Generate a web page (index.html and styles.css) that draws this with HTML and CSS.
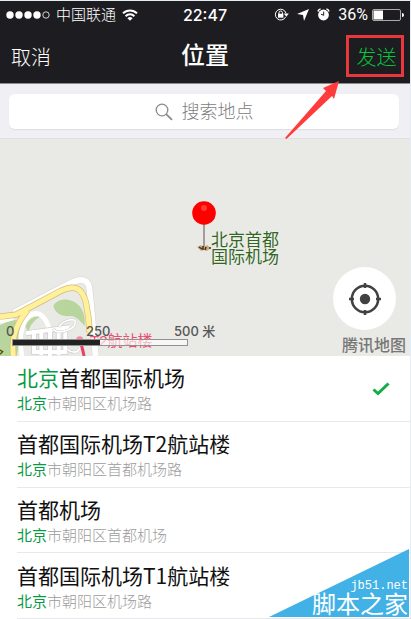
FILE: index.html
```html
<!DOCTYPE html>
<html lang="zh-CN">
<head>
<meta charset="utf-8">
<meta name="viewport" content="width=device-width, initial-scale=1">
<title>位置</title>
<link rel="stylesheet" href="styles.css">
</head>
<body>
<div class="app">
  <header class="top">
    <div class="status">
      <div class="status-side">
        <svg class="dots" width="44" height="10" viewBox="0 0 44 10" fill="#fff"><circle cx="4" cy="5" r="3.7"/><circle cx="13" cy="5" r="3.7"/><circle cx="22" cy="5" r="3.7"/><circle cx="31" cy="5" r="3.7"/><circle cx="40" cy="5" r="3.2" fill="none" stroke="#fff" stroke-width=".8"/></svg>
        <span class="carrier">中国联通</span>
        <svg width="16" height="12" viewBox="0 0 16 12" fill="none" stroke="#fff" stroke-width="2"><path d="M1 4.4a10 10 0 0 1 14 0M3.6 7.2a6.2 6.2 0 0 1 8.8 0"/><path d="M8 11.8 5.4 9.2a3.7 3.7 0 0 1 5.2 0z" fill="#fff" stroke="none"/></svg>
      </div>
      <span class="time">22:47</span>
      <div class="status-side status-right">
        <svg width="15" height="13" viewBox="0 0 15 13"><path d="M11.7 8.8a5.4 5.4 0 1 1 .3-3.5" fill="none" stroke="#fff" stroke-width="1"/><path d="M9.8 5.5h5l-2.5 3.2z" fill="#fff"/><rect x="4" y="5.7" width="5.4" height="4" fill="#fff"/><path d="M5 6V4.7a1.7 1.7 0 0 1 3.4 0V6" fill="none" stroke="#fff"/></svg>
        <svg width="12" height="12" viewBox="0 0 12 12" fill="#fff"><path d="M12 0 7 12 6 6 0 5z"/></svg>
        <svg width="13" height="13" viewBox="0 0 13 13"><circle cx="6.5" cy="7" r="5.4" fill="#fff"/><path d="M.9 3.5A4 4 0 0 1 3.6.9M9.4.9a4 4 0 0 1 2.7 2.6" fill="none" stroke="#fff" stroke-width="1.5"/><path d="M6.7 3.6v3.7L4 6.2" fill="none" stroke="#1d1d21" stroke-width="1"/></svg>
        <span class="percent">36%</span>
        <svg width="32" height="12" viewBox="0 0 32 12"><rect x=".5" y=".5" width="28" height="11" rx="1.5" fill="none" stroke="#aaa"/><rect x="1.5" y="1.5" width="9.5" height="9" fill="#fff"/><path d="M30 4a2 2 0 0 1 0 4z" fill="#fff"/></svg>
      </div>
    </div>
    <nav class="nav">
      <button class="cancel" type="button">取消</button>
      <h1>位置</h1>
      <button class="send" type="button">发送</button>
    </nav>
  </header>
  <svg class="arrow" width="58" height="60" viewBox="0 0 58 60"><path d="M55 1 39 8l3 3L1 58l1.500 1L48 16l2 3z" fill="#ff3b3b"/></svg>

  <div class="search">
    <label class="search-box">
      <svg width="18" height="18" viewBox="0 0 18 18" fill="none" stroke="#8b8b8b" stroke-width="1.300"><circle cx="7" cy="7" r="5.800"/><path d="m11.200 11.200 5.800 5.600" stroke-width="1.800"/></svg>
      <input type="text" placeholder="搜索地点" aria-label="搜索地点">
    </label>
  </div>

  <section class="map" aria-label="地图">
    <svg class="roads" width="206" height="96" viewBox="0 0 618 288" fill="none">
      <path d="M0 196 38 178l34 12-22 98H0z" fill="#b7d59c"/>
      <path d="M160 138c14-25 50-24 72-6 18 14 24 40 22 66-16-18-26-29-42-30-20 2-44-2-52-30z" fill="#b7d59c"/>
      <path d="M74 194c10-16 30-26 46-24-20 12-28 24-36 46z" fill="#b7d59c"/>
      <path d="M42 158 218 66q48-20 51 26l18 196" stroke="#d5d5d0" stroke-width="21"/>
      <path d="M42 158 218 66q48-20 51 26l18 196" stroke="#fff" stroke-width="18"/>
      <path d="M66 288c-10-52-6-94 24-122 30-18 50 10 58 44M0 184l40-10" stroke="#fff" stroke-width="14"/>
      <g stroke="#d4cfd2" stroke-width="17"><path d="m78 220 130-18M102 210v66h94v-62M124 210v76M150 208v80M176 210v76"/></g>
      <g stroke="#fff" stroke-width="12"><path d="m78 220 130-18M102 210v66h94v-62M124 210v76M150 208v80M176 210v76"/></g>
      <path d="M178 202c4-18 50-34 48-14-2 22-56 38-66 18m42 62c26 20 48 0 36-26" stroke="#cfcacc" stroke-width="8"/>
      <path d="M178 202c4-18 50-34 48-14-2 22-56 38-66 18m42 62c26 20 48 0 36-26" stroke="#fff" stroke-width="5"/>
      <path d="M0 170l48-6 132-70c48-24 68-6 78 34 8 40 10 64 11 90M82 152C48 190 34 232 40 288" stroke="#d5ba74" stroke-width="19"/>
      <path d="M0 170l48-6 132-70c48-24 68-6 78 34 8 40 10 64 11 90M82 152C48 190 34 232 40 288" stroke="#fff09a" stroke-width="15"/>
      <path d="M238 240q8 16 14 48" stroke="#e74164" stroke-width="9"/>
      <circle cx="239" cy="239" r="10" fill="#f58ba0"/>
      <path d="m0 270 8 5-8 8" stroke="#554400" stroke-width="4"/>
    </svg>
    <span class="terminal">T2航站楼</span>
    <div class="scale">
      <div class="scale-labels"><span>0</span><span>250</span><span>500 米</span></div>
      <div class="scale-bar"></div>
    </div>
    <svg class="pin" width="26" height="54" viewBox="0 0 26 54"><path d="M13 22v25" stroke="#a39c9a" stroke-width="2"/><path d="m6 46 4-2 3 2 3-2 4 3-4 3-3-1-3 1z" fill="#c6ae80"/><path d="m8 46 3 2m1-3v4m3-3-1 3m4-2h2" stroke="#43321e" stroke-width="1.500"/><circle cx="13" cy="12" r="11.800" fill="#f00"/><circle cx="13" cy="7" r="3" fill="#ff3b30"/></svg>
    <p class="place">北京首都<br>国际机场</p>
    <div class="map-corner">
      <button class="locate" type="button" aria-label="定位"><svg width="34" height="34" viewBox="0 0 34 34" fill="none" stroke="#414141"><circle cx="17" cy="17" r="13.200" stroke-width="2.500"/><path d="M17 1v5M17 28v5M1 17h5M28 17h5" stroke-width="2.500"/><circle cx="17" cy="17" r="5.200" fill="#414141" stroke="none"/></svg></button>
      <span class="provider">腾讯地图</span>
    </div>
  </section>

  <ul class="results">
    <li><div class="result"><h2><em>北京</em>首都国际机场</h2><p><em>北京</em>市朝阳区机场路</p></div>
      <svg class="check" width="18" height="14" viewBox="0 0 18 14" fill="none" stroke="#12ad45" stroke-width="3"><path d="m1.500 7.500 4.500 4L16.500 1.500"/></svg></li>
    <li><div class="result"><h2>首都国际机场T2航站楼</h2><p><em>北京</em>市朝阳区首都机场路</p></div></li>
    <li><div class="result"><h2>首都机场</h2><p><em>北京</em>市朝阳区首都机场</p></div></li>
    <li><div class="result"><h2>首都国际机场T1航站楼</h2><p><em>北京</em>市朝阳区机场路</p></div></li>
  </ul>

  <div class="watermark">
    <svg width="140" height="68" viewBox="0 0 140 68"><path d="M140 0v68H0z" fill="#42b2e6"/></svg>
    <div class="mark-text">
      <span class="mark-url">jb51.net</span>
      <span class="mark-name">脚本之家</span>
    </div>
  </div>
</div>
</body>
</html>
```
FILE: styles.css
```css
* {
  box-sizing: border-box;
}

body {
  margin: 0;
  background: #e3edf2;
  font-family: "Liberation Sans", "Noto Sans CJK SC", sans-serif;
}

svg {
  display: block;
  flex: none;
}

button {
  margin: 0;
  padding: 0;
  border: 0;
  background: none;
  font: inherit;
}

h1, h2, p, ul {
  margin: 0;
  padding: 0;
  font-weight: 400;
}

em {
  color: #079a44;
  font-style: normal;
}

.app {
  position: relative;
  display: flex;
  flex-direction: column;
  min-height: 100vh;
  padding: 1px 1px 0 0;
}

.top {
  height: 83px;
  padding-top: 2px;
  border-bottom: 1px solid #8d8d90;
  background: #1d1d21;
  color: #fff;
}

.status {
  display: grid;
  grid-template-columns: 1fr auto 1fr;
  align-items: center;
  height: 23px;
  padding: 0 6px;
}

.status-side {
  display: flex;
  align-items: center;
  gap: 6px;
}

.status-right {
  justify-content: flex-end;
  gap: 8px;
}

.carrier {
  font-size: 15px;
  font-weight: 300;
  line-height: 20px;
}

.time {
  font: 500 16px/20px Inter, sans-serif;
}

.percent {
  margin-right: -4px;
  font: 400 16px/20px Roboto, sans-serif;
}

.nav {
  display: grid;
  grid-template-columns: 1fr auto 1fr;
  align-items: center;
  height: 56px;
  padding: 4px 6px 0;
}

.nav h1 {
  font-size: 24px;
  font-weight: 500;
  line-height: 34px;
}

.cancel {
  justify-self: start;
  margin-left: 5px;
  color: #fff;
  font-size: 20px;
  font-weight: 300;
}

.send {
  justify-self: end;
  width: 58px;
  height: 42px;
  padding-left: 3px;
  border: 3px solid #e9383d;
  color: #08c53b;
  font-size: 20px;
  font-weight: 300;
}

.arrow {
  position: absolute;
  z-index: 2;
  top: 80px;
  right: 69px;
}

.search {
  padding: 10px 11px 9px 9px;
  border-bottom: 1px solid #e0e0e3;
  background: #efeff4;
}

.search-box {
  display: flex;
  align-items: center;
  justify-content: center;
  gap: 9px;
  height: 35px;
  border-radius: 6px;
  background: #fff;
  box-shadow: 0 1px 1px #dedee3;
}

.search-box input {
  width: 72px;
  height: 32px;
  padding: 2px 0 0;
  border: 0;
  outline: 0;
  background: none;
  font: inherit;
  font-size: 18px;
}

.search-box input::placeholder {
  color: #808080;
  font-weight: 300;
}

.map {
  position: relative;
  flex: none;
  height: 217px;
  overflow: hidden;
  background: #e9e9e5;
}

.roads {
  position: absolute;
  bottom: 0;
  left: 0;
}

.terminal {
  position: absolute;
  bottom: 5px;
  left: 90px;
  color: #ee4d70;
  font-size: 15px;
  line-height: 20px;
}

.scale {
  position: absolute;
  bottom: 10px;
  left: 6px;
  color: #555;
  font: 500 13px/16px Inter, "Noto Sans CJK SC", sans-serif;
}

.scale-labels {
  display: grid;
  grid-template-columns: 80px 88px auto;
}

.scale-bar {
  width: 176px;
  height: 7px;
  margin-left: 6px;
  border: 1px solid #929292;
  background: linear-gradient(90deg, #222 50%, #ffffffa0 50%);
}

.pin {
  position: absolute;
  top: 62px;
  left: calc(50% - 14px);
}

.place {
  position: absolute;
  top: 93px;
  left: calc(50% + 6px);
  color: #326623;
  font-size: 17px;
  line-height: 17px;
  text-shadow: 0 0 2px #fff;
}

.map-corner {
  position: absolute;
  right: 4px;
  bottom: 0;
  display: flex;
  flex-direction: column;
  align-items: flex-end;
  gap: 6px;
}

.locate {
  display: grid;
  place-items: center;
  width: 63px;
  height: 63px;
  margin-right: 10px;
  border-radius: 50%;
  background: #fff;
}

.provider {
  color: #777;
  font-size: 16px;
  font-weight: 500;
  line-height: 20px;
}

.results {
  display: flex;
  flex: 1;
  flex-direction: column;
  padding-left: 17px;
  background: #fff;
  list-style: none;
}

.results li {
  display: flex;
  flex: 1;
  align-items: center;
  justify-content: space-between;
  padding: 2px 20px 0 0;
  border-bottom: 1px solid #e9e9ec;
}

.result h2 {
  color: #111;
  font-family: "Noto Sans CJK SC", sans-serif;
  font-size: 21px;
  line-height: 30px;
}

.result p {
  color: #9c9c9c;
  font-size: 15px;
  font-weight: 300;
  line-height: 24px;
}

.result p em {
  font-weight: 400;
}

.watermark {
  position: absolute;
  right: 2px;
  bottom: 2px;
  color: #fff;
}

.mark-text {
  position: absolute;
  right: 1px;
  bottom: 0;
  display: flex;
  flex-direction: column;
  align-items: flex-end;
}

.mark-url {
  font: 12px/12px "Liberation Mono", monospace;
}

.mark-name {
  font-size: 24px;
  line-height: 25px;
  white-space: nowrap;
}
```
